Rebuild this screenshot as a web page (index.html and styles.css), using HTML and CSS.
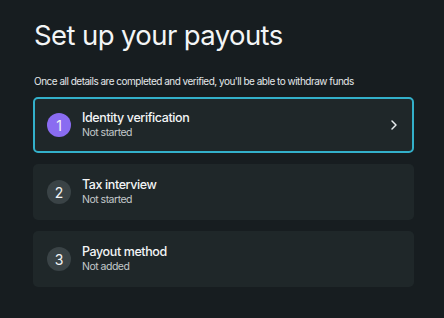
FILE: index.html
```html
<!DOCTYPE html>
<html lang="en">
<head>
    <meta charset="UTF-8">
    <meta name="viewport" content="width=device-width, initial-scale=1.0">
    <title>Set up your payouts</title>
    <link rel="stylesheet" href="styles.css">
</head>
<body>
    <div class="container">
        <h1>Set up your payouts</h1>
        <p class="intro">Once all details are completed and verified, you'll be able to withdraw funds</p>

        <div class="steps">
            <div class="step active">
                <div class="num">1</div>
                <div class="info">
                    <div class="title">Identity verification</div>
                    <div class="status">Not started</div>
                </div>
                <svg class="chevron" width="8" height="12" viewBox="0 0 8 12">
                    <path d="M2 2 L6 6 L2 10" fill="none" stroke="#e8ecee" stroke-width="1.5" stroke-linecap="round" stroke-linejoin="round"/>
                </svg>
            </div>
            <div class="step">
                <div class="num">2</div>
                <div class="info">
                    <div class="title">Tax interview</div>
                    <div class="status">Not started</div>
                </div>
            </div>
            <div class="step">
                <div class="num">3</div>
                <div class="info">
                    <div class="title">Payout method</div>
                    <div class="status">Not added</div>
                </div>
            </div>
        </div>
    </div>
</body>
</html>
```

FILE: styles.css
```css
html, body {
    margin: 0;
    padding: 0;
}
body {
    font-family: Inter, "Noto Sans", sans-serif;
    background-color: #171d20;
    color: #f3f5f6;
}
.container {
    padding: 17px 30px 0 33px;
}
h1 {
    font-size: 27.5px;
    font-weight: 400;
    letter-spacing: -0.6px;
    margin: 0 0 0 1px;
    line-height: 36px;
}
.intro {
    font-size: 10px;
    letter-spacing: -0.5px;
    color: #e4e8ea;
    margin: 21px 0 9px 1px;
    line-height: 14px;
}
.steps {
    display: flex;
    flex-direction: column;
    gap: 11px;
}
.step {
    display: flex;
    align-items: center;
    height: 56px;
    box-sizing: border-box;
    padding: 0 14px 0 12px;
    background: #1f2729;
    border-radius: 5px;
    border: 2px solid transparent;
}
.step.active {
    border-color: #33b0ca;
}
.num {
    width: 24px;
    height: 24px;
    border-radius: 50%;
    background: #3a4346;
    color: #f3f5f6;
    font-size: 14px;
    display: flex;
    align-items: center;
    justify-content: center;
    flex-shrink: 0;
}
.step.active .num {
    background: #8a6cf1;
}
.info {
    flex: 1;
    margin-left: 11px;
}
.title {
    font-size: 12.5px;
    font-weight: 500;
    letter-spacing: -0.4px;
    line-height: 16px;
}
.status {
    font-size: 10.5px;
    letter-spacing: -0.5px;
    color: #c3c9cb;
    line-height: 14px;
}
.chevron {
    flex-shrink: 0;
}
```
